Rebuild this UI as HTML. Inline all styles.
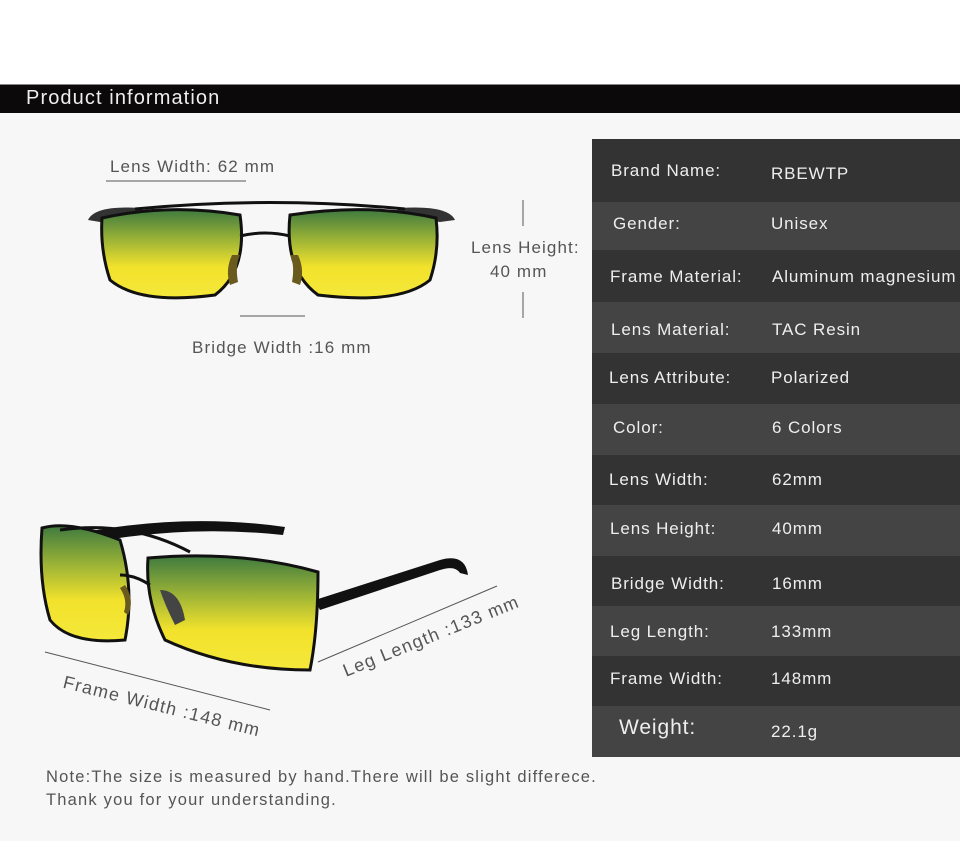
<!DOCTYPE html>
<html><head><meta charset="utf-8"><style>
*{margin:0;padding:0}
body{width:960px;height:841px;background:#f7f7f7;position:relative;overflow:hidden;font-family:"Liberation Sans",sans-serif}
.top{position:absolute;left:0;top:0;width:960px;height:84px;background:#fff}
.bar{position:absolute;left:0;top:84px;width:960px;height:29px;background:#0b0909;border-top:1px solid #888;box-sizing:border-box}
.bar span{position:absolute;left:26px;top:2px;color:#eee;font-size:20px;letter-spacing:1.1px}
.tbl{position:absolute;left:592px;top:139px;width:368px}
.r{position:relative;color:#eee;font-size:17px;letter-spacing:0.9px;white-space:nowrap}
.r .k{position:absolute;left:19px}
.r .v{position:absolute;left:179px}
.t{position:absolute;color:#555;font-size:17px;white-space:nowrap;letter-spacing:1.1px}
</style></head><body>
<div class="top"></div>
<div class="bar"><span>Product information</span></div>
<svg width="960" height="841" style="position:absolute;left:0;top:0">
<defs>
<linearGradient id="g" x1="0" y1="0" x2="0" y2="1"><stop offset="0" stop-color="#3f7a3f"/><stop offset=".35" stop-color="#9fb536"/><stop offset=".65" stop-color="#f2e22c"/><stop offset="1" stop-color="#f5e83a"/></linearGradient>
</defs>
<g stroke="#555" stroke-width="1" fill="#555">
<line x1="106" y1="181" x2="246" y2="181"/><line x1="240" y1="316" x2="305" y2="316"/>
<line x1="523" y1="200" x2="523" y2="226"/><line x1="523" y1="292" x2="523" y2="318"/>
<line x1="45" y1="652" x2="270" y2="710"/><line x1="318" y1="662" x2="497" y2="586"/>
</g>
<!-- front glasses -->
<path d="M88 220 Q95 205 140 208 L150 215 L100 222 Z" fill="#333"/>
<path d="M455 220 Q448 205 400 208 L390 215 L440 222 Z" fill="#333"/>
<path d="M102 218 Q170 203 240 215 Q248 270 215 295 Q140 305 110 280 Q100 250 102 218Z" fill="url(#g)" stroke="#111" stroke-width="3"/>
<path d="M436 218 Q370 203 290 215 Q284 270 318 295 Q400 305 430 280 Q440 250 436 218Z" fill="url(#g)" stroke="#111" stroke-width="3"/>
<path d="M135 209 Q270 196 405 209" stroke="#111" stroke-width="3" fill="none"/>
<path d="M240 236 Q265 230 290 236" stroke="#111" stroke-width="3" fill="none"/>
<path d="M232 255 Q225 270 230 285 L238 282 Q235 265 240 255Z" fill="#6b5a1e"/>
<path d="M298 255 Q305 270 300 285 L292 282 Q295 265 290 255Z" fill="#6b5a1e"/>
<!-- angled glasses -->
<path d="M70 535 Q180 512 285 527 L283 535 Q180 524 80 545Z" fill="#111"/>
<path d="M315 600 L440 560 Q465 553 468 575 L460 573 Q455 565 440 570 L320 610Z" fill="#111"/>
<path d="M42 528 Q70 520 120 540 Q135 590 125 640 Q70 645 50 620 Q38 580 42 528Z" fill="url(#g)" stroke="#111" stroke-width="3"/>
<path d="M148 558 Q240 550 318 572 Q318 630 310 670 Q230 670 165 640 Q145 600 148 558Z" fill="url(#g)" stroke="#111" stroke-width="3"/>
<path d="M60 530 Q130 520 190 552" stroke="#111" stroke-width="3" fill="none"/>
<path d="M120 575 Q135 575 150 585" stroke="#111" stroke-width="3" fill="none"/>
<path d="M160 590 Q180 590 185 620 L175 625 Q165 605 160 590Z" fill="#444"/>
<path d="M125 585 Q135 600 128 615 L124 612 Q128 600 120 588Z" fill="#6b5a1e"/>
</svg>
<div class="t" style="left:110px;top:157px">Lens Width: 62 mm</div>
<div class="t" style="left:471px;top:238px">Lens Height:</div>
<div class="t" style="left:490px;top:262px">40 mm</div>
<div class="t" style="left:192px;top:338px">Bridge Width :16 mm</div>
<div class="t" style="left:66px;top:672px;transform:rotate(14deg);transform-origin:0 0;font-size:18px;letter-spacing:1.3px">Frame Width :148 mm</div>
<div class="t" style="left:340px;top:662px;transform:rotate(-22deg);transform-origin:0 0;font-size:18px;letter-spacing:1.3px">Leg Length :133 mm</div>
<div class="t" style="left:46px;top:768px;font-size:16.5px;letter-spacing:1.2px">Note:The size is measured by hand.There will be slight differece.</div>
<div class="t" style="left:46px;top:791px;font-size:16.5px;letter-spacing:1.2px">Thank you for your understanding.</div>
<div class="tbl">
<div class="r" style="height:63px;background:#333"><span class="k" style="top:22px">Brand Name:</span><span class="v" style="top:25px">RBEWTP</span></div>
<div class="r" style="height:48px;background:#444"><span class="k" style="top:12px;left:21px">Gender:</span><span class="v" style="top:12px">Unisex</span></div>
<div class="r" style="height:52px;background:#333"><span class="k" style="top:17px;left:18px">Frame Material:</span><span class="v" style="top:17px;left:180px">Aluminum magnesium</span></div>
<div class="r" style="height:51px;background:#444"><span class="k" style="top:18px">Lens Material:</span><span class="v" style="top:18px;left:180px">TAC Resin</span></div>
<div class="r" style="height:51px;background:#333"><span class="k" style="top:15px;left:17px">Lens Attribute:</span><span class="v" style="top:15px">Polarized</span></div>
<div class="r" style="height:51px;background:#444"><span class="k" style="top:14px;left:21px">Color:</span><span class="v" style="top:14px;left:180px">6 Colors</span></div>
<div class="r" style="height:50px;background:#333"><span class="k" style="top:15px;left:17px">Lens Width:</span><span class="v" style="top:15px;left:180px">62mm</span></div>
<div class="r" style="height:51px;background:#444"><span class="k" style="top:14px;left:18px">Lens Height:</span><span class="v" style="top:14px;left:180px">40mm</span></div>
<div class="r" style="height:50px;background:#333"><span class="k" style="top:18px">Bridge Width:</span><span class="v" style="top:18px;left:180px">16mm</span></div>
<div class="r" style="height:50px;background:#444"><span class="k" style="top:16px;left:18px">Leg Length:</span><span class="v" style="top:16px">133mm</span></div>
<div class="r" style="height:50px;background:#333"><span class="k" style="top:13px;left:18px">Frame Width:</span><span class="v" style="top:13px">148mm</span></div>
<div class="r" style="height:51px;background:#444"><span class="k" style="top:10px;left:27px;font-size:21px">Weight:</span><span class="v" style="top:16px">22.1g</span></div>
</div>
</body></html>
